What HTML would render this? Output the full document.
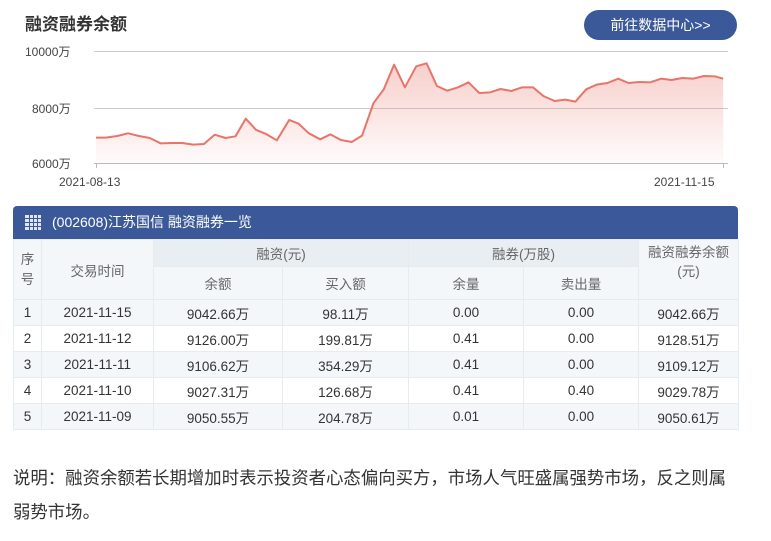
<!DOCTYPE html>
<html><head><meta charset="utf-8"><style>
body{margin:0;width:771px;height:541px;background:#fff;font-family:"Liberation Sans","Noto Sans CJK SC",sans-serif;color:#333;position:relative;overflow:hidden}
.t{position:absolute;left:25px;top:10px;font-size:17px;font-weight:bold;color:#333}
.btn{position:absolute;left:584px;top:10px;width:153px;height:30px;border-radius:15px;background:#3b5998;color:#fff;font-size:14px;line-height:30px;text-align:center}
.ax{position:absolute;font-size:12px;color:#444}
.bar{position:absolute;left:13px;top:206px;width:725px;height:33px;background:#3b5998;border-radius:4px 4px 0 0;color:#fff;font-size:14px;line-height:33px}
table{position:absolute;left:13px;top:239px;width:725px;border-collapse:collapse;font-size:13.5px;text-align:center;table-layout:fixed}
td{padding:0;border:1px solid #e6ebf0}
.h td{background:#f4f7fa;color:#666}
.g{background:#e9eef3!important}
.d td{height:25px;color:#333}
.d:nth-child(odd) td{background:#f4f7fa}
.note{position:absolute;left:13px;top:461px;width:725px;font-size:17.4px;line-height:34px;color:#333}
</style></head><body>
<div class="t">融资融券余额</div>
<div class="btn">前往数据中心&gt;&gt;</div>
<div class="ax" style="left:25px;top:43px">10000万</div>
<div class="ax" style="left:32px;top:100px">8000万</div>
<div class="ax" style="left:32px;top:155px">6000万</div>
<div class="ax" style="left:59px;top:175px">2021-08-13</div>
<div class="ax" style="left:654px;top:175px">2021-11-15</div>
<svg style="position:absolute;left:0;top:0" width="771" height="200">
<defs><linearGradient id="gr" x1="0" y1="0" x2="0" y2="1"><stop offset="0" stop-color="#e8756a" stop-opacity="0.35"/><stop offset="1" stop-color="#e8756a" stop-opacity="0.03"/></linearGradient></defs>
<line x1="94" y1="51.5" x2="728" y2="51.5" stroke="#ccc"/>
<line x1="94" y1="108.5" x2="728" y2="108.5" stroke="#ccc"/>
<line x1="94" y1="163.5" x2="728" y2="163.5" stroke="#bbb"/>
<line x1="96.5" y1="163" x2="96.5" y2="168" stroke="#bbb"/>
<line x1="723.5" y1="163" x2="723.5" y2="168" stroke="#bbb"/>
<g transform="scale(0.4926,0.3333)">
<polygon fill="url(#gr)" points="195,490 195,413 215,413 238,408 260,400 282,408 304,414 326,430 348,429 370,429 392,434 414,432 436,404 458,414 478,409 499,356 520,390 540,402 562,421 587,360 606,371 627,400 650,418 671,403 692,420 714,426 735,407 758,310 779,268 800,194 822,262 845,199 866,190 887,258 908,272 930,262 951,247 973,279 995,277 1016,267 1038,273 1060,262 1082,262 1103,288 1126,303 1148,299 1168,305 1190,268 1211,254 1233,249 1255,236 1276,249 1298,246 1320,247 1342,236 1363,240 1385,234 1407,236 1429,228 1451,229 1468,236 1468,490"/>
<polyline fill="none" stroke="#e8756a" stroke-width="2" vector-effect="non-scaling-stroke" stroke-linejoin="round" points="195,413 215,413 238,408 260,400 282,408 304,414 326,430 348,429 370,429 392,434 414,432 436,404 458,414 478,409 499,356 520,390 540,402 562,421 587,360 606,371 627,400 650,418 671,403 692,420 714,426 735,407 758,310 779,268 800,194 822,262 845,199 866,190 887,258 908,272 930,262 951,247 973,279 995,277 1016,267 1038,273 1060,262 1082,262 1103,288 1126,303 1148,299 1168,305 1190,268 1211,254 1233,249 1255,236 1276,249 1298,246 1320,247 1342,236 1363,240 1385,234 1407,236 1429,228 1451,229 1468,236"/>
</g></svg>
<div class="bar"><svg style="position:absolute;left:12px;top:9px" width="16" height="15"><rect x="0" y="0" width="16" height="15" fill="#dfe6f2"/><g stroke="#3b5998" stroke-width="1"><line x1="4.5" y1="0" x2="4.5" y2="15"/><line x1="8.5" y1="0" x2="8.5" y2="15"/><line x1="12.5" y1="0" x2="12.5" y2="15"/><line x1="0" y1="3.5" x2="16" y2="3.5"/><line x1="0" y1="7.5" x2="16" y2="7.5"/><line x1="0" y1="11.5" x2="16" y2="11.5"/></g></svg><span style="position:absolute;left:39px">(002608)江苏国信 融资融券一览</span></div>
<table>
<colgroup><col style="width:28px"><col style="width:112px"><col style="width:129px"><col style="width:126px"><col style="width:115px"><col style="width:115px"><col style="width:100px"></colgroup>
<tr class="h"><td rowspan="2" style="line-height:20px">序<br>号</td><td rowspan="2">交易时间</td><td colspan="2" class="g" style="height:26px">融资(元)</td><td colspan="2" class="g">融券(万股)</td><td rowspan="2" style="line-height:19px;vertical-align:top;padding-top:3px">融资融券余额<br>(元)</td></tr>
<tr class="h"><td style="height:32px">余额</td><td>买入额</td><td>余量</td><td>卖出量</td></tr>
<tr class="d"><td>1</td><td>2021-11-15</td><td>9042.66万</td><td>98.11万</td><td>0.00</td><td>0.00</td><td>9042.66万</td></tr>
<tr class="d"><td>2</td><td>2021-11-12</td><td>9126.00万</td><td>199.81万</td><td>0.41</td><td>0.00</td><td>9128.51万</td></tr>
<tr class="d"><td>3</td><td>2021-11-11</td><td>9106.62万</td><td>354.29万</td><td>0.41</td><td>0.00</td><td>9109.12万</td></tr>
<tr class="d"><td>4</td><td>2021-11-10</td><td>9027.31万</td><td>126.68万</td><td>0.41</td><td>0.40</td><td>9029.78万</td></tr>
<tr class="d"><td>5</td><td>2021-11-09</td><td>9050.55万</td><td>204.78万</td><td>0.01</td><td>0.00</td><td>9050.61万</td></tr>
</table>
<div class="note">说明：融资余额若长期增加时表示投资者心态偏向买方，市场人气旺盛属强势市场，反之则属弱势市场。</div>
</body></html>
